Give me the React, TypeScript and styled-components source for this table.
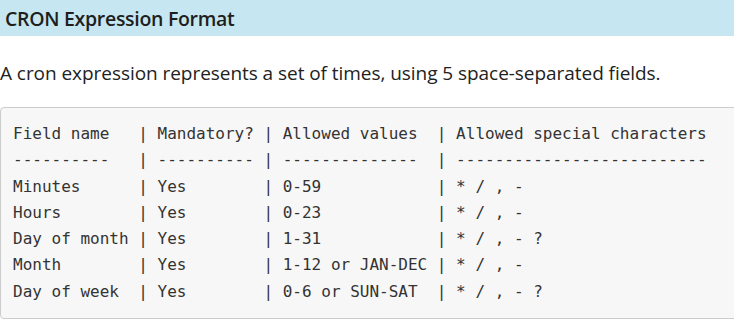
import React from 'react';
import styled, { createGlobalStyle } from 'styled-components';

const GlobalStyle = createGlobalStyle`
    html, body {
        margin: 0;
        padding: 0;
        background: #ffffff;
        overflow: hidden;
    }
    body {
        font-family: 'Open Sans', 'Noto Sans', sans-serif;
        color: #222;
    }
`;

const Page = styled.div`
    width: 734px;
    height: 328px;
    display: flex;
    flex-direction: column;
`;

const TitleBar = styled.div`
    height: 36px;
    background: #c6e7f1;
    display: flex;
    align-items: center;
    padding-left: 5px;
    margin-right: -10px;
`;

const Title = styled.h2`
    margin: 0;
    font-size: 19.5px;
    font-weight: 600;
    color: #1e1e1e;
    letter-spacing: -0.3px;
`;

const Intro = styled.p`
    margin: 24px 0 0 0;
    height: 26px;
    line-height: 26px;
    font-size: 19px;
    color: #222;
    letter-spacing: -0.05px;
`;

const CodeBlock = styled.pre`
    margin: 21px -20px 0 0;
    padding: 13px 12px;
    background: #f7f7f7;
    border: 1px solid #cccccc;
    border-radius: 4px;
    font-family: 'DejaVu Sans Mono', 'Liberation Mono', monospace;
    font-size: 16px;
    line-height: 26.3px;
    color: #333;
    white-space: pre;
    overflow: hidden;
`;

const rows = [
    ['Field name', 'Mandatory?', 'Allowed values', 'Allowed special characters'],
    ['----------', '----------', '--------------', '--------------------------'],
    ['Minutes', 'Yes', '0-59', '* / , -'],
    ['Hours', 'Yes', '0-23', '* / , -'],
    ['Day of month', 'Yes', '1-31', '* / , - ?'],
    ['Month', 'Yes', '1-12 or JAN-DEC', '* / , -'],
    ['Day of week', 'Yes', '0-6 or SUN-SAT', '* / , - ?'],
];

const widths = [12, 10, 15];

const formatRow = (cells: string[]) =>
    cells
        .map((c, i) => (i < widths.length ? c.padEnd(widths[i], ' ') : c))
        .join(' | ');

const App: React.FC = () => {
    const text = rows.map(formatRow).join('\n');
    return (
        <Page>
            <GlobalStyle />
            <TitleBar>
                <Title>CRON Expression Format</Title>
            </TitleBar>
            <Intro>A cron expression represents a set of times, using 5 space-separated fields.</Intro>
            <CodeBlock>{text}</CodeBlock>
        </Page>
    );
};

export default App;
